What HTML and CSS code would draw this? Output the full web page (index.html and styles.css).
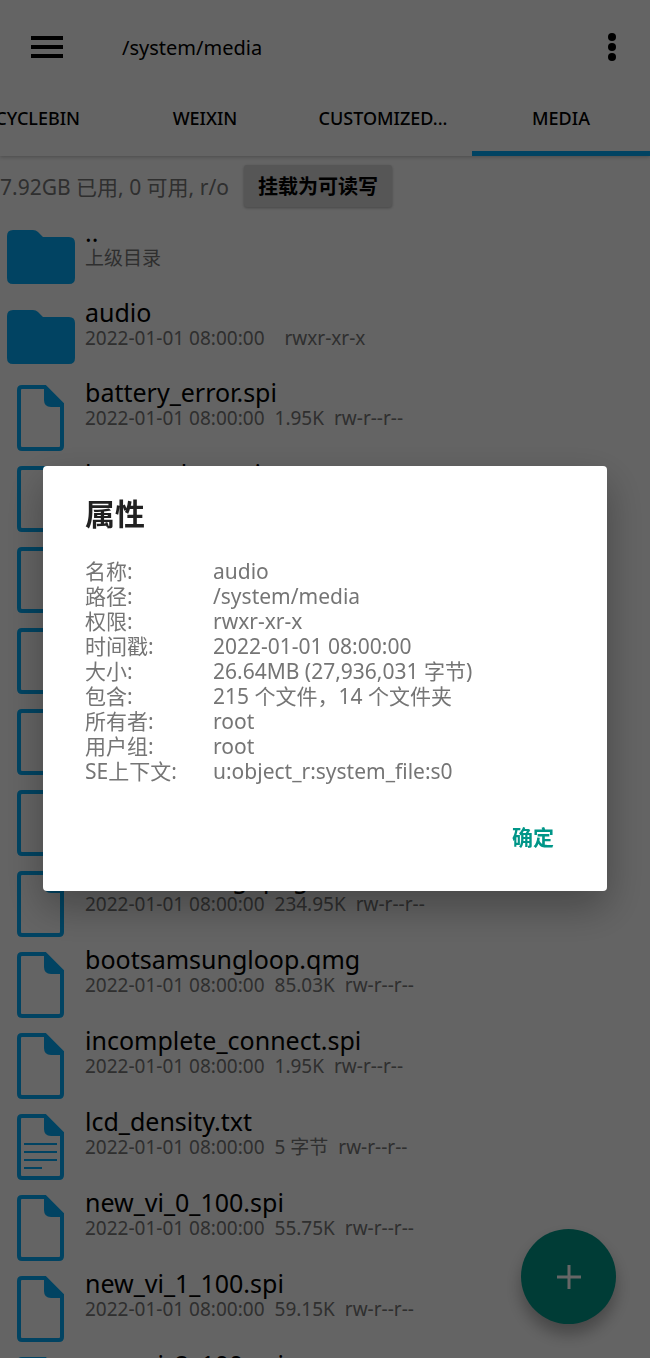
FILE: index.html
```html
<!DOCTYPE html>
<html lang="zh-CN">
<head>
    <meta charset="UTF-8">
    <meta name="viewport" content="width=device-width, initial-scale=1.0">
    <title>/system/media</title>
    <link rel="stylesheet" href="styles.css">
</head>
<body>
    <!-- Icons -->
    <svg class="sprite" aria-hidden="true">
        <symbol id="folder" viewBox="0 0 68 54">
            <path d="M6 0H26Q29 0 31 2L36 7H62Q68 7 68 13V48Q68 54 62 54H6Q0 54 0 48V6Q0 0 6 0Z" fill="currentColor"/>
        </symbol>
        <symbol id="file" viewBox="0 0 47 66">
            <path d="M5 2H28L45 19V61Q45 64 42 64H5Q2 64 2 61V5Q2 2 5 2Z" fill="none" stroke="currentColor" stroke-width="4"/>
            <path d="M27 1L46 20V22H34Q27 22 27 15Z" fill="currentColor"/>
        </symbol>
        <symbol id="text-file" viewBox="0 0 47 66">
            <use href="#file"/>
            <path d="M7 30H40M7 38H40M7 46H40M7 54H25" stroke="currentColor" stroke-width="2"/>
        </symbol>
    </svg>

    <div class="app">
        <header>
            <div class="toolbar">
                <button class="icon-button" aria-label="菜单">
                    <svg width="32" height="22" viewBox="0 0 32 22"><path d="M0 2H32M0 11H32M0 20H32" stroke="#000" stroke-width="4"/></svg>
                </button>
                <h1>/system/media</h1>
                <button class="icon-button" aria-label="更多">
                    <svg width="8" height="28" viewBox="0 0 8 28"><circle cx="4" cy="4" r="4"/><circle cx="4" cy="14" r="4"/><circle cx="4" cy="24" r="4"/></svg>
                </button>
            </div>
            <nav>
                <a href="#">RECYCLEBIN</a>
                <a href="#">WEIXIN</a>
                <a href="#">CUSTOMIZED...</a>
                <a href="#" class="active">MEDIA</a>
            </nav>
        </header>

        <div class="storage">
            <span>7.92GB 已用, 0 可用, r/o</span>
            <button>挂载为可读写</button>
        </div>

        <ul class="files">
            <li class="dir">
                <svg class="folder"><use href="#folder"/></svg>
                <div><h2>..</h2><p>上级目录</p></div>
            </li>
            <li class="dir">
                <svg class="folder"><use href="#folder"/></svg>
                <div><h2>audio</h2><p><span>2022-01-01 08:00:00</span><span></span><span>rwxr-xr-x</span></p></div>
            </li>
            <li>
                <svg class="file"><use href="#file"/></svg>
                <div><h2>battery_error.spi</h2><p><span>2022-01-01 08:00:00</span><span>1.95K</span><span>rw-r--r--</span></p></div>
            </li>
            <li>
                <svg class="file"><use href="#file"/></svg>
                <div><h2>battery_low.spi</h2></div>
            </li>
            <li>
                <svg class="file"><use href="#file"/></svg>
            </li>
            <li>
                <svg class="file"><use href="#file"/></svg>
            </li>
            <li>
                <svg class="file"><use href="#file"/></svg>
            </li>
            <li>
                <svg class="file"><use href="#file"/></svg>
            </li>
            <li>
                <svg class="file"><use href="#file"/></svg>
                <div><h2>bootsamsung.qmg</h2><p><span>2022-01-01 08:00:00</span><span>234.95K</span><span>rw-r--r--</span></p></div>
            </li>
            <li>
                <svg class="file"><use href="#file"/></svg>
                <div><h2>bootsamsungloop.qmg</h2><p><span>2022-01-01 08:00:00</span><span>85.03K</span><span>rw-r--r--</span></p></div>
            </li>
            <li>
                <svg class="file"><use href="#file"/></svg>
                <div><h2>incomplete_connect.spi</h2><p><span>2022-01-01 08:00:00</span><span>1.95K</span><span>rw-r--r--</span></p></div>
            </li>
            <li>
                <svg class="file"><use href="#text-file"/></svg>
                <div><h2>lcd_density.txt</h2><p><span>2022-01-01 08:00:00</span><span>5 字节</span><span>rw-r--r--</span></p></div>
            </li>
            <li>
                <svg class="file"><use href="#file"/></svg>
                <div><h2>new_vi_0_100.spi</h2><p><span>2022-01-01 08:00:00</span><span>55.75K</span><span>rw-r--r--</span></p></div>
            </li>
            <li>
                <svg class="file"><use href="#file"/></svg>
                <div><h2>new_vi_1_100.spi</h2><p><span>2022-01-01 08:00:00</span><span>59.15K</span><span>rw-r--r--</span></p></div>
            </li>
            <li>
                <svg class="file"><use href="#file"/></svg>
                <div><h2>new_vi_2_100.spi</h2></div>
            </li>
        </ul>

        <button class="add-button" aria-label="新建">
            <svg width="24" height="24" viewBox="0 0 24 24"><path d="M12 0V24M0 12H24" stroke="#fff" stroke-width="3"/></svg>
        </button>
    </div>

    <!-- Properties dialog -->
    <div class="overlay">
        <div class="dialog" role="dialog" aria-labelledby="dialog-title">
            <h2 id="dialog-title">属性</h2>
            <table>
                <tr><th>名称:</th><td>audio</td></tr>
                <tr><th>路径:</th><td>/system/media</td></tr>
                <tr><th>权限:</th><td>rwxr-xr-x</td></tr>
                <tr><th>时间戳:</th><td>2022-01-01 08:00:00</td></tr>
                <tr><th>大小:</th><td>26.64MB (27,936,031 字节)</td></tr>
                <tr><th>包含:</th><td>215 个文件，14 个文件夹</td></tr>
                <tr><th>所有者:</th><td>root</td></tr>
                <tr><th>用户组:</th><td>root</td></tr>
                <tr><th>SE上下文:</th><td>u:object_r:system_file:s0</td></tr>
            </table>
            <div class="actions">
                <button>确定</button>
            </div>
        </div>
    </div>
</body>
</html>
```
FILE: styles.css
```css
* {
    box-sizing: border-box;
}

body {
    font-family: "Noto Sans", "Noto Sans CJK SC", sans-serif;
    margin: 0;
    background-color: #fafafa;
}

h1, h2, p, ul {
    margin: 0;
    padding: 0;
    font-weight: normal;
}

button {
    font-family: inherit;
    border: none;
    padding: 0;
    background: none;
    cursor: pointer;
}

svg {
    display: block;
}

.sprite {
    display: none;
}

.app {
    height: 100vh;
    overflow: hidden;
}

/* Header */
header {
    height: 156px;
    background-color: #fafafa;
    box-shadow: 0 1px 4px rgba(0, 0, 0, 0.25);
}

.toolbar {
    display: flex;
    align-items: center;
    height: 94px;
    padding: 0 34px 0 31px;
}

.toolbar h1 {
    flex: 1;
    margin-left: 59px;
    font-size: 20px;
}

nav {
    display: flex;
    justify-content: flex-end;
    height: 62px;
}

nav a {
    flex: none;
    width: 178px;
    padding-top: 10px;
    line-height: 28px;
    text-align: center;
    font-size: 18px;
    font-weight: 500;
    color: #000;
    text-decoration: none;
}

nav a.active {
    border-bottom: 5px solid #03a9f4;
}

/* Storage info */
.storage {
    display: flex;
    align-items: center;
    gap: 15px;
    height: 61px;
    padding-bottom: 2px;
    font-size: 21px;
    color: #757575;
}

.storage button {
    height: 42px;
    padding: 0 14px;
    border-radius: 3px;
    background-color: #d6d6d6;
    box-shadow: 0 1px 3px rgba(0, 0, 0, 0.3);
    font-size: 20px;
    font-weight: 700;
    color: #000;
}

/* File list */
.files {
    list-style: none;
}

.files li {
    display: flex;
    align-items: center;
    height: 81px;
    color: #03a9f4;
}

.files .dir {
    height: 80px;
}

.files svg {
    flex: none;
}

.files .folder {
    width: 68px;
    height: 54px;
    margin: 0 10px 0 7px;
}

.files .file {
    width: 47px;
    height: 66px;
    margin: 0 21px 0 17px;
}

.files div {
    align-self: flex-start;
}

.files h2 {
    font-size: 25px;
    line-height: 30px;
    color: #000;
}

.files p {
    display: flex;
    gap: 10px;
    font-size: 19px;
    line-height: 22px;
    color: #757575;
}

.add-button {
    position: fixed;
    right: 34px;
    bottom: 34px;
    display: flex;
    align-items: center;
    justify-content: center;
    width: 95px;
    height: 95px;
    border-radius: 50%;
    background-color: #009688;
    box-shadow: 0 10px 16px rgba(0, 0, 0, 0.3);
}

/* Dialog */
.overlay {
    position: fixed;
    inset: 0;
    display: flex;
    align-items: center;
    justify-content: center;
    padding: 0 43px 2px;
    background-color: rgba(0, 0, 0, 0.6);
}

.dialog {
    width: 100%;
    padding: 28px 42px;
    border-radius: 4px;
    background-color: #fff;
    box-shadow: 0 16px 40px rgba(0, 0, 0, 0.3);
}

.dialog h2 {
    margin-bottom: 25px;
    font-size: 30px;
    font-weight: 700;
    line-height: 40px;
    color: #212121;
}

.dialog table {
    border-collapse: collapse;
    font-size: 21px;
    line-height: 25px;
    color: #757575;
}

.dialog th {
    width: 128px;
    padding: 0;
    text-align: left;
    font-weight: normal;
}

.dialog td {
    padding: 0;
}

.actions {
    display: flex;
    justify-content: flex-end;
    padding: 33px 11px 6px;
}

.actions button {
    font-size: 21px;
    font-weight: 700;
    line-height: 40px;
    color: #009688;
}
```
